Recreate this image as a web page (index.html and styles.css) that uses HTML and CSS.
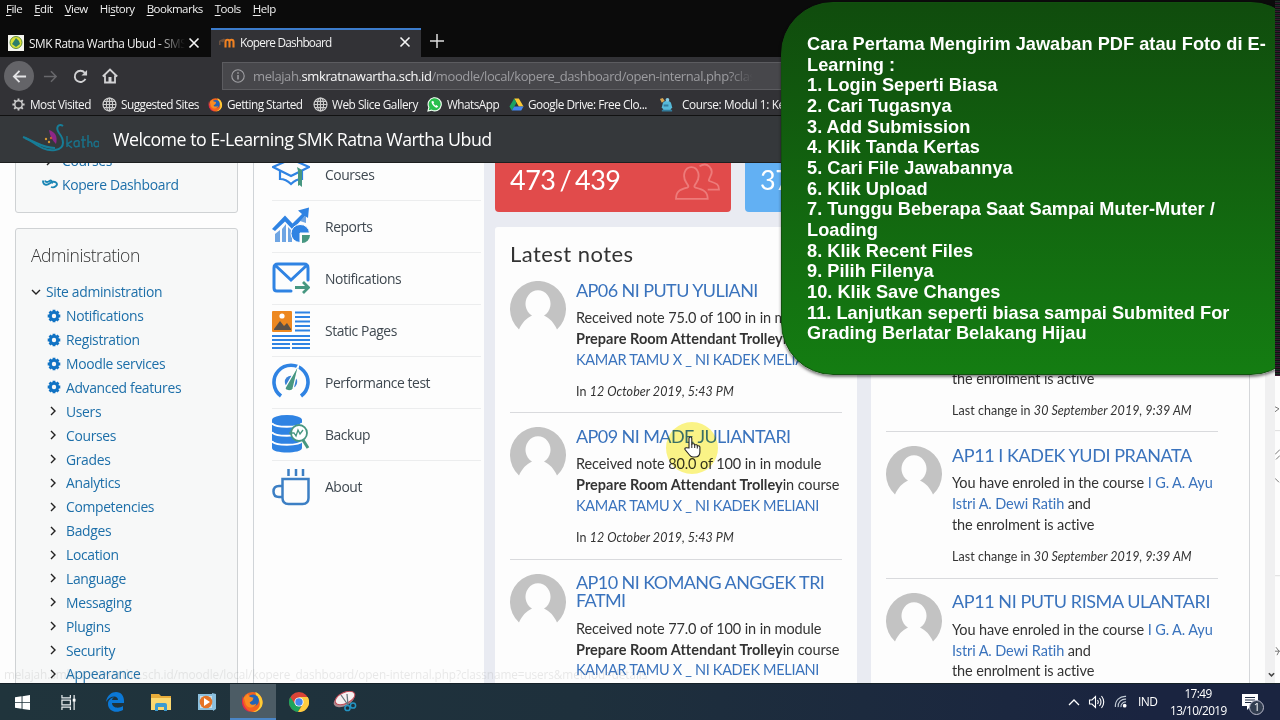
FILE: index.html
```html
<!DOCTYPE html>
<html lang="en">
<head>
<meta charset="utf-8">
<title>Kopere Dashboard</title>
<link rel="stylesheet" href="styles.css">
</head>
<body>
<svg class="defs" width="0" height="0">
  <defs>
    <symbol id="gear" viewBox="0 0 16 16"><g fill="none" stroke="currentColor"><circle cx="8" cy="8" r="4.200" stroke-width="3.400"/><path d="M8 .8v2M8 13.200v2M.8 8h2M13.200 8h2M2.900 2.900l1.500 1.500M11.600 11.600l1.500 1.500M13.100 2.900l-1.500 1.500M4.400 11.600l-1.500 1.500" stroke-width="3.200"/></g></symbol>
    <symbol id="gear-thin" viewBox="0 0 16 16"><g fill="none" stroke="currentColor"><circle cx="8" cy="8" r="4" stroke-width="1.600"/><path d="M8 1.500v2.500M8 12v2.500M1.500 8h2.500M12 8h2.500M3.400 3.400l1.700 1.700M10.900 10.900l1.700 1.700M12.600 3.400l-1.700 1.700M5.100 10.900l-1.700 1.700" stroke-width="2"/></g></symbol>
    <symbol id="globe" viewBox="0 0 16 16"><g fill="none" stroke="currentColor" stroke-width="1.300"><circle cx="8" cy="8" r="6.900"/><ellipse cx="8" cy="8" rx="3.300" ry="6.900"/><path d="M8 1v14M1 8h14M2 4.600h12M2 11.400h12"/></g></symbol>
    <symbol id="firefox" viewBox="0 0 24 24"><circle cx="12" cy="12.500" r="10.500" fill="#f4631e"/><path d="M15 2c5 2 8 7 7.500 12-.6 5-5 9-10 9 5-2 8-5 7-10 0-4-4-6-4.500-11z" fill="#ffcd35"/><path d="M2 6c-1 9 3 15 9 17-6 0-10-5-10-10.500C1 10 1 8 2 6z" fill="#e22850"/><circle cx="12.500" cy="11" r="6.200" fill="#2463b5"/><path d="M3 8l4-4 2 3 4 1-1 3-3 2c1 3 5 3 7 1-1 5-8 6-11 1z" fill="#fb8b22"/></symbol>
    <symbol id="close" viewBox="0 0 12 12"><path d="M1.500 1.500l9 9M10.500 1.500l-9 9" stroke="currentColor" stroke-width="1.600" fill="none"/></symbol>
    <symbol id="chev" viewBox="0 0 10 10"><path d="M3 1l4 4-4 4" stroke="currentColor" stroke-width="1.400" fill="none"/></symbol>
    <symbol id="avatar" viewBox="0 0 56 56"><path d="M9 48.500A28 28 0 1 1 47 48.500C44 42 40 37.500 34 34.600A12.500 13.500 0 1 0 22 34.600C16 37.500 12 42 9 48.500Z" fill="#c3c3c3"/></symbol>
  </defs>
</svg>
<div class="screen">
  <nav class="menubar"><span><u>F</u>ile</span><span><u>E</u>dit</span><span><u>V</u>iew</span><span>Hi<u>s</u>tory</span><span><u>B</u>ookmarks</span><span><u>T</u>ools</span><span><u>H</u>elp</span></nav>
  <div class="tabs">
    <div class="tab">
      <svg class="tab-ico" viewBox="0 0 16 16"><path fill="#f4f4ee" d="M0 0h16v16H0z"/><circle cx="8" cy="7.500" r="6" fill="#dbe03a" stroke="#63913a"/><path d="M8 3l3 3 1 3-4 3-4-3 2-3z" fill="#2d7d6c"/></svg>
      <span class="tab-name fade">SMK Ratna Wartha Ubud - SMS</span>
      <svg class="x"><use href="#close"/></svg>
    </div>
    <div class="tab active">
      <svg class="tab-ico" viewBox="0 0 16 16"><path d="M6.500 13.500V8q0-2.200 2-2.200t2 2.200v5.500M10.500 8q0-2.200 2-2.200t2 2.200v5.500" stroke="#ef8122" stroke-width="2.100" fill="none"/><path d="M0 6.500l5-2 1.500 1-2.500 3zM0 7h1.500v4H0z" fill="#6a5140"/></svg>
      <span class="tab-name">Kopere Dashboard</span>
      <svg class="x"><use href="#close"/></svg>
    </div>
    <svg class="plus" viewBox="0 0 14 14"><path d="M7 0v14M0 7h14" stroke="#ddd" stroke-width="1.500"/></svg>
  </div>
  <div class="navbar">
    <span class="back"><svg viewBox="0 0 16 16"><path d="M15 8H2M8 2L2 8l6 6" stroke="#e4e4e6" stroke-width="1.900" fill="none"/></svg></span>
    <svg class="nav-ico fwd" viewBox="0 0 16 16"><path d="M1 8h13M8.500 2.500L14 8l-5.500 5.500" stroke="#68686c" stroke-width="1.600" fill="none"/></svg>
    <svg class="nav-ico reload" viewBox="0 0 16 16"><path d="M13.300 10.500A6 6 0 1 1 12.500 4" stroke="#d2d2d4" stroke-width="2" fill="none"/><path d="M15 1v6H9z" fill="#d2d2d4"/></svg>
    <svg class="nav-ico home" viewBox="0 0 16 16"><path d="M.8 8.500L8 1.500l7.200 7M3 7.500V14.500h10V7.500" stroke="#d2d2d4" stroke-width="1.800" fill="none"/><path d="M6.500 9h3v5h-3z" fill="#d2d2d4"/></svg>
    <div class="url">
      <svg viewBox="0 0 14 14"><circle cx="7" cy="7" r="6.200" fill="none" stroke="#a0a0a4" stroke-width="1.100"/><path d="M7 6v4.500M7 3.200v1.600" stroke="#a0a0a4" stroke-width="1.500"/></svg>
      <span class="url-text">melajah.<b>smkratnawartha.sch.id</b>/moodle/local/kopere_dashboard/open-internal.php?clas</span>
    </div>
  </div>
  <div class="bookmarks">
    <span class="bm b1"><svg><use href="#gear-thin"/></svg>Most Visited</span>
    <span class="bm b2"><svg><use href="#globe"/></svg>Suggested Sites</span>
    <span class="bm b3"><svg><use href="#firefox"/></svg>Getting Started</span>
    <span class="bm b4"><svg><use href="#globe"/></svg>Web Slice Gallery</span>
    <span class="bm b5"><svg viewBox="0 0 16 16"><path d="M1 15l1-4a7 7 0 1 1 3 3z" fill="#29bf4c" stroke="#f2fff4" stroke-width="1.200"/><path d="M5 4.500c-1 2 2.500 6.500 5.500 7l1.500-1.500-2-1.500-1 .8L6.800 7l.8-.8-.9-2z" fill="#fff"/></svg>WhatsApp</span>
    <span class="bm b6"><svg viewBox="0 0 16 16"><path d="M5.500 1.500h5l5 8.500h-5z" fill="#fbc934"/><path d="M5.500 1.500L.5 10 3 14.500 8 6z" fill="#1ca261"/><path d="M5.500 10h10L13 14.500H3z" fill="#4385f0"/></svg>Google Drive: Free Clo...</span>
    <span class="bm b7"><svg viewBox="0 0 16 16"><path d="M4 7c1-4 8-4 9 0l1 4-2 3H5l-2-3z" fill="#56b9d8"/><path d="M1 2l3-1 2 3-3 2z" fill="#d9a752"/><path d="M5 8h5v2H5zM3 13.500h11v2H3z" fill="#327c9c"/><circle cx="9" cy="3" r="2" fill="#86cbe3"/></svg>Course: Modul 1: Kelas</span>
  </div>
  <header class="site-head">
    <svg class="logo" viewBox="0 0 78 32"><path d="M2 14C12 17 20 29 34 27c12-2 8-12 4-17-4-6 0-10 4-7" stroke="#177d97" stroke-width="2" fill="none"/><path d="M4 15C15 19 22 25 34 25" stroke="#177d97" stroke-width="2.200" fill="none"/><path d="M28 7c6 2 9 6 7 14-4-4-6-8-7-14z" fill="#8d2689"/><circle cx="25" cy="16" r="1.200" fill="#d69a35"/><circle cx="28" cy="19" r="1.200" fill="#d69a35"/><circle cx="30" cy="15" r="1.200" fill="#c65b37"/><path d="M46 13v11M51 18l-5 3 5 4M58 18q-5-1-5 3t5 2v-5 6M62 13v11h2M60 17h5M67 12v12M67 20q4-4 4 4M78 19q-5-2-5 2t5 2v-4 5" stroke="#1a7088" stroke-width="1.500" fill="none"/></svg>
    <span>Welcome to E-Learning SMK Ratna Wartha Ubud</span>
  </header>
  <main class="page">
    <aside class="side">
      <section class="block nav-block">
        <div class="row cut"><svg><use href="#chev"/></svg><a>Courses</a></div>
        <div class="row kop"><svg viewBox="0 0 16 12"><path d="M1 1.500c0 5 4 5 6.500 3S13 2 14.500 4 12.500 9.500 9 8M3 1.500c1 2.500 3 1.500 4.500.5s3 0 2.500 2.500" stroke="#1b86b5" stroke-width="1.900" fill="none"/></svg><a>Kopere Dashboard</a></div>
      </section>
      <section class="block admin">
        <h2>Administration</h2>
        <div class="row root"><svg><use href="#chev"/></svg><a>Site administration</a></div>
        <div class="row gear"><svg><use href="#gear"/></svg><a>Notifications</a></div>
        <div class="row gear"><svg><use href="#gear"/></svg><a>Registration</a></div>
        <div class="row gear"><svg><use href="#gear"/></svg><a>Moodle services</a></div>
        <div class="row gear"><svg><use href="#gear"/></svg><a>Advanced features</a></div>
        <div class="row"><svg><use href="#chev"/></svg><a>Users</a></div>
        <div class="row"><svg><use href="#chev"/></svg><a>Courses</a></div>
        <div class="row"><svg><use href="#chev"/></svg><a>Grades</a></div>
        <div class="row"><svg><use href="#chev"/></svg><a>Analytics</a></div>
        <div class="row"><svg><use href="#chev"/></svg><a>Competencies</a></div>
        <div class="row"><svg><use href="#chev"/></svg><a>Badges</a></div>
        <div class="row"><svg><use href="#chev"/></svg><a>Location</a></div>
        <div class="row"><svg><use href="#chev"/></svg><a>Language</a></div>
        <div class="row"><svg><use href="#chev"/></svg><a>Messaging</a></div>
        <div class="row"><svg><use href="#chev"/></svg><a>Plugins</a></div>
        <div class="row"><svg><use href="#chev"/></svg><a>Security</a></div>
        <div class="row"><svg><use href="#chev"/></svg><a>Appearance</a></div>
      </section>
    </aside>
    <div class="region">
      <nav class="kmenu">
        <a><svg viewBox="0 0 38 38"><g fill="none" stroke="#2f83e3" stroke-width="2.200"><path d="M1 12L19 4l18 8-18 9zM8 16v8c5 0 8 2 11 5 3-3 7-5 11-5v-8"/></g><path d="M25 12l5 3v17l-2.500-2-1.500 1V16z" fill="#479781"/></svg>Courses</a>
        <a><svg viewBox="0 0 38 38"><path d="M3 27l5-4v12H3zM10 22l4-5v18h-4zM16 20l4 4v11h-4zM28 14l6-6v8z" fill="#6fa5e3"/><path d="M0 22L13 8.500l7.500 8L30 7l-4-3.500L37 .5 36 11l-3-2-12.500 13.500-7.500-8L3 24z" fill="#2f83e3"/><path d="M28 17.500a9 9 0 1 0 0 18V26h9.500a9 9 0 0 0-9.500-8.500z" fill="#2f83e3" stroke="#fdfdfd" stroke-width="1"/><path d="M30 28h8a8 8 0 0 1-8 8z" fill="#479781"/></svg>Reports</a>
        <a><svg viewBox="0 0 38 38"><path d="M19 32H5q-3 0-3-3V9q0-4 4-4h26q4 0 4 4v12M4 7l15 14L34 7" fill="none" stroke="#2f83e3" stroke-width="3" stroke-linecap="round"/><path d="M23 28.500h13M31 23l5.500 5.500L31 34" fill="none" stroke="#479781" stroke-width="2.800"/></svg>Notifications</a>
        <a><svg viewBox="0 0 38 38"><rect width="20" height="21" rx="1" fill="#ed8820"/><path d="M2 18l6-8 4 5 3-3 4 6v1H2z" fill="#5b5148"/><circle cx="10" cy="5" r="2.600" fill="#fff"/><path d="M23 1.500h15M23 6h15M23 10.500h15M23 15h15M23 19.500h15M0 25h38M0 29h38M0 33h18M20 33h18M0 37h18M20 37h18" stroke="#2f83e3" stroke-width="2"/></svg>Static Pages</a>
        <a><svg viewBox="0 0 38 38"><path d="M9 33A17 17 0 1 1 29 33" fill="none" stroke="#2f83e3" stroke-width="3.600"/><circle cx="19" cy="19" r="6.200" fill="#3b83d6"/><path d="M27 1l-6 25c-1 3-8 2-8-1z" fill="#479781" stroke="#fff" stroke-width="1.200"/></svg>Performance test</a>
        <a><svg viewBox="0 0 38 38"><path d="M0 5v28c0 6 30 6 30 0V5z" fill="#2f83e3"/><ellipse cx="15" cy="5" rx="15" ry="5" fill="#2f83e3"/><path d="M0 8c2 5 28 5 30 0M0 17c2 5 28 5 30 0M0 26c2 5 28 5 30 0" stroke="#fff" stroke-width="2" fill="none"/><circle cx="27" cy="18" r="8" fill="#fff" stroke="#479781" stroke-width="1.800"/><path d="M31 25l5 8" stroke="#479781" stroke-width="3"/><path d="M17 18h5l2 3 2-6 2 4 3-4" fill="none" stroke="#479781" stroke-width="1.300"/></svg>Backup</a>
        <a><svg viewBox="0 0 38 38"><path d="M10.500 11h26v19q0 6-6 6h-14q-6 0-6-6zM10 18H7q-5.500 0-5.500 5.500T7 29h3M16.500 1v7M24 1v7M31 1v7" fill="none" stroke="#3c7fc4" stroke-width="2.500"/></svg>About</a>
      </nav>
      <div class="dash">
        <div class="stats">
          <div class="stat red"><span>473 / 439</span><svg viewBox="0 0 44 36"><path d="M1 35c0-7 3-9 11-11 2-1 1-2-1-5-4-6-2-15 5-15s9 9 5 15c-2 3-3 4-1 5 8 2 12 4 12 11zM24 3c8-5 14 3 11 9-2 5-3 5 0 6 6 2 8 3 8 8H32" fill="none" stroke="#ed7b7a" stroke-width="1.800"/></svg></div>
          <div class="stat blue"><span>37</span></div>
        </div>
        <div class="cards">
          <section class="card notes">
            <h3>Latest notes</h3>
            <article><svg><use href="#avatar"/></svg><div><h4>AP06 NI PUTU YULIANI</h4><p>Received note 75.0 of 100 in in module<br><b>Prepare Room Attendant Trolley</b>in course<br><a class="caps">KAMAR TAMU X _ NI KADEK MELIANI</a></p><small>In <i>12 October 2019, 5:43 PM</i></small></div></article>
            <article><svg><use href="#avatar"/></svg><div><h4>AP09 NI MADE JULIANTARI</h4><p>Received note 80.0 of 100 in in module<br><b>Prepare Room Attendant Trolley</b>in course<br><a class="caps">KAMAR TAMU X _ NI KADEK MELIANI</a></p><small>In <i>12 October 2019, 5:43 PM</i></small></div></article>
            <article><svg><use href="#avatar"/></svg><div><h4>AP10 NI KOMANG ANGGEK TRI<br>FATMI</h4><p>Received note 77.0 of 100 in in module<br><b>Prepare Room Attendant Trolley</b>in course<br><a class="caps">KAMAR TAMU X _ NI KADEK MELIANI</a></p></div></article>
          </section>
          <section class="card enrol">
            <article><svg></svg><div><h4>&nbsp;</h4><p><br><br>the enrolment is active</p><small>Last change in <i>30 September 2019, 9:39 AM</i></small></div></article>
            <article><svg><use href="#avatar"/></svg><div><h4>AP11 I KADEK YUDI PRANATA</h4><p>You have enroled in the course <a>I G. A. Ayu<br>Istri A. Dewi Ratih</a> and<br>the enrolment is active</p><small>Last change in <i>30 September 2019, 9:39 AM</i></small></div></article>
            <article><svg><use href="#avatar"/></svg><div><h4>AP11 NI PUTU RISMA ULANTARI</h4><p>You have enroled in the course <a>I G. A. Ayu<br>Istri A. Dewi Ratih</a> and<br>the enrolment is active</p></div></article>
          </section>
        </div>
      </div>
    </div>
    <div class="scrollbar"><svg viewBox="0 0 8 6"><path d="M1 1l3 3 3-3" stroke="#444" stroke-width="1.800" fill="none"/></svg></div>
    <div class="status">melajah.smkratnawartha.sch.id/moodle/local/kopere_dashboard/open-internal.php?classname=users&amp;method=details</div>
  </main>
  <footer class="taskbar">
    <span class="task"><svg viewBox="0 0 16 16"><path d="M0 2.300L7 1.300V7.600H0zM8 1.200L16 0V7.600H8zM0 8.500H7V14.700L0 13.700zM8 8.500H16V16L8 14.800z" fill="#fff"/></svg></span>
    <span class="task"><svg viewBox="0 0 16 16"><path d="M1 0v3h9V0M1 16v-3h9v3M1 5.500h9v5H1zM14 0v16" stroke="#e8edef" stroke-width="1.300" fill="none"/><path d="M12.500 4h3v3h-3z" fill="#fff"/></svg></span>
    <span class="task"><svg class="edge" viewBox="0 0 20 20"><path d="M1 10C2 3 7 0 11 0c6 0 8.500 5 8 11H7c0 5 7 6 11 3v4c-7 4-15 1-15-6 0-4 3-6 6-7-1 1-2 2-2 3h6c0-5-8-5-12 2z" fill="#0b78d6"/></svg></span>
    <span class="task"><svg class="edge" viewBox="0 0 20 20"><path d="M0 2h8l2 2h10v14H0z" fill="#e8ac3a"/><path d="M0 6h20v12H0z" fill="#fbd870"/><path d="M4 19v-6q0-2 2-2h8q2 0 2 2v6h-3v-4H7v4z" fill="#3b9bd0"/></svg></span>
    <span class="task"><svg class="edge" viewBox="0 0 20 20"><path d="M1 2h16v16H1zM15 1l4 1v15l-3 2z" fill="#8bbfdd"/><path d="M3 4h12v12H3z" fill="#c9dfeb"/><circle cx="9" cy="10" r="6.300" fill="#e57326"/><path d="M7 6l6 4-6 4z" fill="#fff"/></svg></span>
    <span class="task on"><svg class="ff"><use href="#firefox"/></svg></span>
    <span class="task"><svg class="edge" viewBox="0 0 20 20"><circle cx="10" cy="10" r="10" fill="#db4437"/><path d="M1.300 5A10 10 0 0 0 9 20l4.500-8L6 12z" fill="#1da35c"/><path d="M10 5h8.700A10 10 0 0 1 9 20l5-8z" fill="#ffcd40"/><circle cx="10" cy="10" r="4.600" fill="#fff"/><circle cx="10" cy="10" r="3.700" fill="#4587ee"/></svg></span>
    <span class="task"><svg class="snip" viewBox="0 0 24 22"><ellipse cx="11" cy="9" rx="11" ry="6" transform="rotate(-25 11 9)" fill="#a9898e"/><ellipse cx="12" cy="7" rx="10.500" ry="5.500" transform="rotate(-25 12 7)" fill="#f7f1f1" stroke="#c24b57"/><path d="M8 4l7 10M14 3l1 11" stroke="#6a767c" stroke-width="1.300"/><circle cx="14.500" cy="17" r="2.600" fill="none" stroke="#2495c4" stroke-width="1.500"/><circle cx="20" cy="14.500" r="2.600" fill="none" stroke="#2495c4" stroke-width="1.500"/></svg></span>
    <div class="tray">
      <svg class="up" viewBox="0 0 12 8"><path d="M1 7l5-5 5 5" stroke="#fff" stroke-width="1.300" fill="none"/></svg>
      <svg class="vol" viewBox="0 0 16 14"><path d="M1 5h2.500L7 1.500v11L3.500 9H1zM9 5q1.500 2 0 4M11 3q3 4 0 8M13 1q4.500 6 0 12" stroke="#fff" stroke-width="1.100" fill="none"/></svg>
      <svg class="wifi" viewBox="0 0 14 14"><path d="M1.500 13C1 6 6 1 13 1.500M4.500 13C4 8 8 4 13 4.500M7.500 13C7 10 10 7 13 7.500" stroke="#c3ccd6" stroke-width="1.200" fill="none"/><circle cx="11.500" cy="11.500" r="2" fill="#fff"/></svg>
      <span class="lang">IND</span>
      <span class="clock">17:49<br>13/10/2019</span>
      <span class="notif"><svg viewBox="0 0 16 16"><path d="M0 0h16v12H9l-4 4v-4H0z" fill="#fff"/><path d="M3 3.500h10M3 6h10M3 8.500h7" stroke="#1c2940" stroke-width="1.100"/></svg><em>1</em></span>
    </div>
  </footer>
  <div class="glitch"></div>
  <svg class="specks" viewBox="0 0 5 310"><path d="M0 33l4 2-4 3M0 81l5-5M1 86l4-4M0 105l4 4M0 279h5M1 275l3 4-2 4" stroke="#777" fill="none"/><path d="M0 57h5M0 203h5" stroke="#ddd"/></svg>
  <div class="note-clip"><div class="note">Cara Pertama Mengirim Jawaban PDF atau Foto di E-<br>Learning :<br>1. Login Seperti Biasa<br>2. Cari Tugasnya<br>3. Add Submission<br>4. Klik Tanda Kertas<br>5. Cari File Jawabannya<br>6. Klik Upload<br>7. Tunggu Beberapa Saat Sampai Muter-Muter /<br>Loading<br>8. Klik Recent Files<br>9. Pilih Filenya<br>10. Klik Save Changes<br>11. Lanjutkan seperti biasa sampai Submited For<br>Grading Berlatar Belakang Hijau</div></div>
  <div class="halo"></div>
  <svg class="hand" viewBox="0 0 17 22"><path d="M5 12V2.500q0-1.500 1.400-1.500T7.800 2.500V8q2.800-.8 2.900.8 2.500-.5 2.600 1 2.600-.3 2.600 1.400V16q0 5-5 5H9q-2 0-3.500-2L1 13.500q-.5-2 1.500-1.800z" fill="#fff" stroke="#222" stroke-width="1.100"/><path d="M7.800 8v4M10.700 9v3M13.300 10v2.500" stroke="#222"/></svg>
</div>
</body>
</html>
```
FILE: styles.css
```css
* { box-sizing: border-box; }
body { margin: 0; background: #000; }
svg { display: block; flex: none; }
.defs { position: absolute; }
.screen { position: relative; width: 1280px; height: 720px; overflow: hidden; display: flex; flex-direction: column; background: #fdfdfd; font-family: "Open Sans", "Noto Sans", sans-serif; white-space: nowrap; }

.menubar { height: 28px; background: #0b0b0b; color: #f1f1f1; font-size: 11.5px; letter-spacing: -.5px; line-height: 18px; display: flex; gap: 12px; padding-left: 6px; }
.menubar u { text-underline-offset: 2px; }
.tabs { height: 29px; background: #0b0b0b; display: flex; }
.tab { width: 211px; height: 29px; display: flex; align-items: center; padding-left: 8px; font-size: 11.8px; letter-spacing: -.68px; color: #f3f3f3; }
.tab.active { width: 210px; background: #323236; border-top: 2px solid #3c7ccc; padding-bottom: 3px; }
.tab-ico { width: 16px; height: 16px; margin-right: 5px; }
.tab-name { width: 156px; overflow: hidden; letter-spacing: -.45px; }
.tab.active .tab-name { width: 156px; letter-spacing: -.75px; }
.fade { -webkit-mask-image: linear-gradient(90deg, #000 82%, transparent); mask-image: linear-gradient(90deg, #000 82%, transparent); }
.x { width: 12px; height: 12px; margin-left: 3px; color: #f5f5f5; }
.plus { width: 14px; height: 14px; margin: 6px 0 0 9px; }

.navbar { height: 38px; background: #323236; display: flex; align-items: center; padding-left: 4px; }
.back { width: 30px; height: 30px; border-radius: 50%; background: #646468; display: flex; align-items: center; justify-content: center; }
.back svg { width: 15px; height: 15px; }
.nav-ico { width: 15px; height: 15px; }
.fwd { margin-left: 9px; }
.reload { margin-left: 15px; }
.home { margin-left: 14px; width: 16px; height: 16px; }
.url { margin-left: 104px; width: 700px; height: 28px; background: #47474b; border: 1px solid #5c5c60; display: flex; align-items: center; padding-left: 8px; }
.url svg { width: 14px; height: 14px; margin-right: 8px; }
.url-text { width: 500px; overflow: hidden; color: #9c9ca0; font-size: 13px; letter-spacing: -.4px; -webkit-mask-image: linear-gradient(90deg, #000 95%, transparent); mask-image: linear-gradient(90deg, #000 95%, transparent); }
.url-text b { font-weight: 400; color: #fafafa; }

.bookmarks { height: 21px; background: #323236; border-bottom: 1px solid #111; display: flex; color: #f3f3f3; font-size: 11.8px; letter-spacing: -.53px; line-height: 18px; padding: 0 0 2px 11px; }
.bm { display: flex; align-items: center; gap: 4px; }
.bm svg { width: 15px; height: 15px; color: #ccc; }
.b1 { width: 91px; }
.b2 { width: 106px; }
.b3 { width: 105px; }
.b4 { width: 114px; letter-spacing: -.48px; }
.b5 { width: 82px; gap: 5px; }
.b6 { width: 150px; letter-spacing: -.48px; }
.b7 { gap: 8px; letter-spacing: -.38px; }

.site-head { height: 47px; background: #35383b; border-bottom: 1px solid #1d1f20; color: #fff; display: flex; align-items: center; padding-left: 21px; font-size: 17.800px; letter-spacing: -.5px; }
.logo { width: 78px; height: 32px; margin-right: 14px; }

.page { position: relative; height: 520px; display: flex; overflow: hidden; background: #fdfdfd; }
.side { width: 253px; padding-left: 15px; }
.block { width: 223px; background: #f7f8f8; border: 1px solid #cfd2d4; border-radius: 3px; }
.nav-block { height: 65px; margin-top: -15px; }
.admin { margin-top: 15px; height: 600px; padding-top: 14px; }
.admin h2 { margin: 0 0 13px 15px; font-size: 17.500px; line-height: 24px; font-weight: 300; color: #333; letter-spacing: -.45px; }
.row { height: 23.880px; display: flex; align-items: center; padding-left: 32px; font-size: 13.900px; letter-spacing: -.33px; color: #1d6fa9; }
.row svg { width: 10px; height: 10px; margin-right: 8px; color: #222; }
.row.root { padding-left: 15px; }
.row.root svg { transform: rotate(90deg); margin-right: 5px; }
.row.gear { padding-left: 31px; }
.row.gear svg { width: 14px; height: 14px; margin-right: 5px; color: #1173c4; }
.row.kop { padding-left: 26px; }
.row.kop svg { width: 16px; height: 12px; margin-right: 4px; }
.row.cut { padding-left: 28px; }

.region { width: 997px; display: flex; background: #e9ebf2; border-left: 1px solid #d0d4d8; border-right: 1px solid #d5d7da; }
.kmenu { width: 230px; height: 540px; background: #fdfdfd; padding-left: 18px; margin-top: -14.500px; }
.kmenu a { height: 52.050px; border-bottom: 1px solid #ecedee; display: flex; align-items: center; gap: 15px; font-size: 13.900px; letter-spacing: -.43px; color: #3f4850; margin-right: 3px; }
.kmenu a:last-child { border-bottom: 0; }
.kmenu svg { width: 38px; height: 38px; }
.dash { font-family: Lato, "Open Sans", sans-serif; padding-left: 11px; width: 765px; }
.stats { display: flex; gap: 14px; height: 49px; }
.stat { width: 236px; height: 49px; border-radius: 0 0 4px 4px; color: #fff; font-size: 27px; letter-spacing: -.5px; word-spacing: -2.500px; line-height: 34px; padding: 0 11px 0 15px; display: flex; justify-content: space-between; }
.red { background: #e14b4b; }
.blue { background: #62b0f3; }
.stat svg { width: 45px; height: 37px; }
.cards { display: flex; gap: 14px; margin-top: 15px; }
.card { width: 362px; height: 480px; background: #fdfdfd; padding-left: 15px; color: #333; border-radius: 3px 3px 0 0; }
.enrol { width: 378px; padding-top: 59px; }
.card h3 { margin: 0; padding-top: 14px; height: 40px; font-size: 22px; line-height: 26px; font-weight: 400; letter-spacing: .45px; }
.card article { width: 332px; height: 146.300px; padding-top: 14px; display: flex; gap: 10px; border-bottom: 1px solid #d9dadd; }
.notes article:last-child, .enrol article:last-child { border: 0; height: 190px; }
.card article > svg { width: 56px; height: 56px; }
.card h4 { margin: -.5px 0 9.500px; font-weight: 400; font-size: 18px; line-height: 18px; letter-spacing: -.58px; color: #3a73bd; }
.enrol h4 { letter-spacing: -.43px; }
.card p { margin: 0; font-size: 14.500px; line-height: 20.900px; letter-spacing: -.11px; }
.card p b { letter-spacing: .02px; }
.card p a { color: #3a73bd; }
.card p .caps { letter-spacing: -.32px; }
.card small { display: block; margin-top: 10px; font-size: 12.500px; line-height: 21px; letter-spacing: .04px; }
.scrollbar { width: 10px; margin-left: 15px; background: #f0f0f1; display: flex; align-items: flex-end; padding: 0 0 5px 3px; }
.scrollbar svg { width: 7px; height: 6px; }
.status { position: absolute; left: 4px; bottom: 2px; font-size: 11.800px; line-height: 13px; letter-spacing: -.1px; color: rgba(150,150,150,.2); }

.taskbar { height: 37px; background: linear-gradient(90deg, #20343c 0%, #1e303c 45%, #1a2440 90%); border-top: 1px solid #152128; display: flex; color: #fff; }
.task { width: 46px; display: flex; align-items: center; justify-content: center; padding-right: 1px; }
.task svg { width: 15px; height: 15px; }
.task .edge { width: 20px; height: 20px; }
.task .ff { width: 23px; height: 23px; }
.task .snip { width: 24px; height: 22px; }
.task.on { background: #4c5c65; border-bottom: 2px solid #4b86c6; }
.tray { margin-left: auto; display: flex; align-items: center; font-size: 12px; letter-spacing: -.6px; padding-bottom: 1px; }
.up { width: 12px; height: 8px; }
.vol { width: 17px; height: 14px; margin-left: 8px; }
.wifi { width: 13px; height: 13px; margin-left: 9px; }
.lang { margin-left: 11px; width: 32px; }
.clock { width: 56px; text-align: center; line-height: 17px; font-size: 11.800px; }
.notif { position: relative; margin: 0 22px 0 16px; }
.notif svg { width: 16px; height: 16px; }
.notif em { position: absolute; left: 7px; top: 6px; width: 15px; height: 15px; border-radius: 50%; background: #323d50; border: 1px solid #bbc; font-style: normal; font-size: 11px; line-height: 12px; text-align: center; }

.glitch { position: absolute; left: 1275px; top: 0; width: 5px; height: 376px; background: repeating-linear-gradient(0deg, rgba(140,30,90,.35) 0 1px, rgba(20,20,30,.9) 1px 2px, rgba(40,110,60,.35) 2px 3px, #111 3px 4px), #16131a; }
.specks { position: absolute; left: 1275px; top: 374px; width: 5px; height: 308px; }
.note-clip { position: absolute; left: 776px; top: 0; width: 499px; height: 384px; overflow: hidden; }
.note { margin: 2px 0 0 5px; width: 522px; height: 373px; border-radius: 52px; background: linear-gradient(#104c0d, #147d12); border: 1px solid #12500f; box-shadow: 0 2px 3px rgba(0,0,0,.5); color: #fff; font: bold 18.200px/20.650px "Liberation Sans", Arial, sans-serif; letter-spacing: .02px; padding: 31px 0 0 25px; }
.halo { position: absolute; left: 666px; top: 422px; width: 52px; height: 52px; border-radius: 50%; background: rgba(250,240,70,.65); mix-blend-mode: multiply; }
.hand { position: absolute; left: 684px; top: 436px; width: 17px; height: 22px; }
```
